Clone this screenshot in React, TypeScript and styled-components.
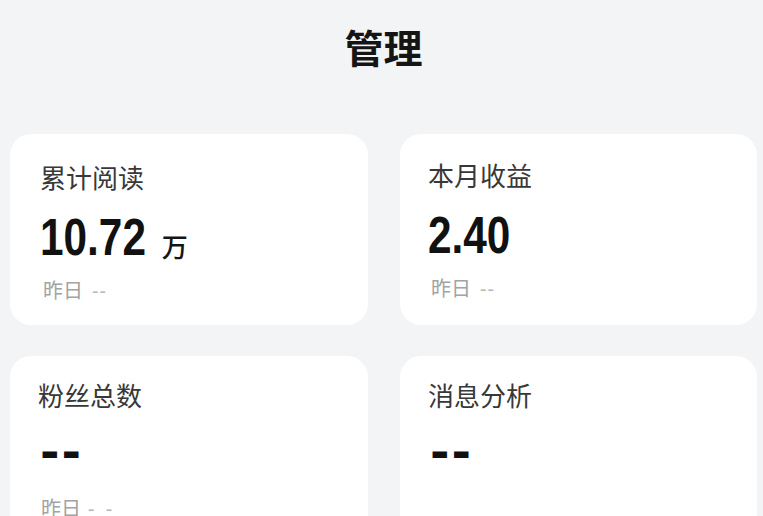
import React from "react";
import styled, { createGlobalStyle } from "styled-components";

const GlobalStyle = createGlobalStyle`
  html, body {
    margin: 0;
    padding: 0;
    background: #f3f4f6;
  }
  body {
    font-family: "Noto Sans CJK SC", "Noto Sans", sans-serif;
    -webkit-font-smoothing: antialiased;
  }
`;

const Page = styled.div`
  width: 763px;
  height: 516px;
  overflow: hidden;
  background: #f3f4f6;
  box-sizing: border-box;
`;

const Header = styled.header`
  display: flex;
  justify-content: center;
  padding: 19px 0 0 4px;
  height: 134px;
  box-sizing: border-box;
`;

const Title = styled.h1`
  margin: 0;
  font-family: "Noto Sans CJK SC", sans-serif;
  font-size: 39px;
  line-height: 54px;
  font-weight: 700;
  color: #151515;
`;

const Grid = styled.div`
  display: grid;
  grid-template-columns: 358px 357px;
  column-gap: 32px;
  row-gap: 31px;
  padding: 0 6px 0 10px;
`;

const Card = styled.div<{ $inset: number; $top: number }>`
  background: #ffffff;
  border-radius: 21px;
  height: 191px;
  box-sizing: border-box;
  padding: ${(p) => p.$top}px 0 0 ${(p) => p.$inset}px;
  display: flex;
  flex-direction: column;
`;

const Label = styled.div`
  font-family: "Noto Sans CJK SC", sans-serif;
  font-size: 26px;
  line-height: 31px;
  font-weight: 400;
  color: #383838;
`;

const ValueRow = styled.div`
  display: flex;
  align-items: baseline;
  margin-top: 20px;
  height: 52px;
`;

const Value = styled.span`
  display: inline-block;
  font-family: "Liberation Sans", Arial, sans-serif;
  font-size: 51px;
  line-height: 52px;
  font-weight: 700;
  color: #111111;
  transform: scaleX(0.83);
  transform-origin: left center;
`;

const Empty = styled.span`
  font-family: "DejaVu Sans", sans-serif;
  font-size: 47px;
  line-height: 44px;
  font-weight: 700;
  letter-spacing: 2px;
  color: #111111;
  margin-left: 2px;
`;

const Unit = styled.span`
  font-family: "Noto Sans CJK SC", sans-serif;
  font-size: 26px;
  font-weight: 500;
  color: #141414;
  margin-left: -6px;
  position: relative;
  top: 2px;
`;

const Sub = styled.div`
  margin-top: 14px;
  padding-left: 3px;
  font-family: "Noto Sans CJK SC", sans-serif;
  font-size: 20px;
  line-height: 24px;
  color: #a3a3a3;
`;

const Dash = styled.span<{ $spaced?: boolean }>`
  font-family: "Noto Sans", sans-serif;
  color: #b8b8b8;
  margin-left: ${(p) => (p.$spaced ? "7px" : "9px")};
  letter-spacing: ${(p) => (p.$spaced ? "3px" : "1px")};
`;

type Stat = {
  label: string;
  value?: string;
  unit?: string;
  sub?: "tight" | "spaced" | null;
  inset: number;
  top: number;
};

const stats: Stat[] = [
  { label: "累计阅读", value: "10.72", unit: "万", sub: "tight", inset: 30, top: 27 },
  { label: "本月收益", value: "2.40", sub: "tight", inset: 28, top: 25 },
  { label: "粉丝总数", sub: "spaced", inset: 28, top: 23 },
  { label: "消息分析", sub: null, inset: 28, top: 23 },
];

export default function App() {
  return (
    <Page>
      <GlobalStyle />
      <Header>
        <Title>管理</Title>
      </Header>
      <Grid>
        {stats.map((s) => (
          <Card key={s.label} $inset={s.inset} $top={s.top}>
            <Label>{s.label}</Label>
            <ValueRow>
              {s.value ? <Value>{s.value}</Value> : <Empty>--</Empty>}
              {s.unit && <Unit>{s.unit}</Unit>}
            </ValueRow>
            {s.sub && (
              <Sub>
                昨日
                <Dash $spaced={s.sub === "spaced"}>
                  {s.sub === "spaced" ? "- -" : "--"}
                </Dash>
              </Sub>
            )}
          </Card>
        ))}
      </Grid>
    </Page>
  );
}
